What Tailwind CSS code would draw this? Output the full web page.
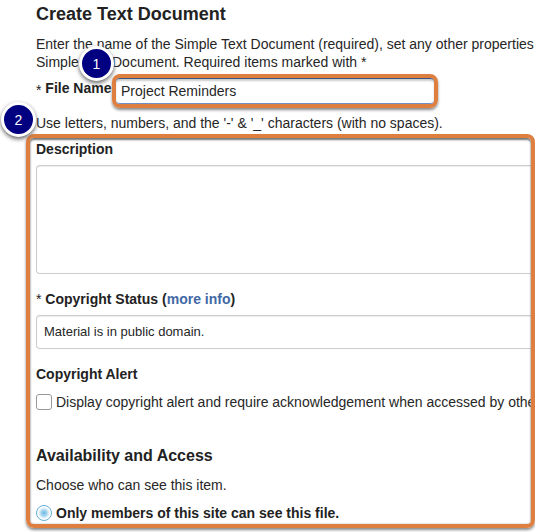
<!DOCTYPE html>
<html lang="en">
<head>
  <meta charset="UTF-8" />
  <meta name="viewport" content="width=device-width, initial-scale=1.0" />
  <title>Create Text Document</title>
  <script src="https://cdn.jsdelivr.net/npm/@tailwindcss/browser@4"></script>
</head>
<body class="bg-white text-[#262626] font-['Liberation_Sans',Arial,sans-serif] text-sm leading-[18px] overflow-x-hidden">

  <form class="relative pb-1">
    <!-- Intro -->
    <div class="pl-9">
      <h1 class="pt-1 text-lg leading-5 font-bold text-[#222]">Create Text Document</h1>
      <p class="pt-[11px] whitespace-nowrap">
        Enter the name of the Simple Text Document (required), set any other properties<br />
        Simple Text Document. Required items marked with *
      </p>

      <!-- File name -->
      <div class="mt-[3px] flex items-start">
        <label for="fileName" class="pt-[5px] w-[76px] shrink-0 whitespace-nowrap font-bold text-[#222]"><span class="inline-block align-text-top pt-[2px] leading-4 font-normal">*</span> File Name</label>
        <div class="w-[326px] rounded-lg border-4 border-[#df7f3f] shadow-[0_2px_3px_#888]">
          <input id="fileName" type="text" value="Project Reminders" class="block w-full h-[26px] pl-[5px] rounded-sm border-y border-t-[#3c5480] border-b-[#6b8fc4] bg-white shadow-[inset_0_2px_2px_#ccc] outline-none" />
        </div>
      </div>
      <p class="mt-[6px]">Use letters, numbers, and the '-' &amp; '_' characters (with no spaces).</p>
    </div>

    <!-- Properties -->
    <section class="relative mt-[2px] ml-[26px] rounded-lg border-4 border-[#df7f3f] pl-[6px] pt-[2px] pb-[2px] shadow-[0_2px_3px_#888] overflow-hidden">
      <label for="description" class="block font-bold text-[#222]">Description</label>
      <textarea id="description" class="mt-[7px] block w-full h-[109px] resize-none rounded-l-sm border border-r-0 border-[#ccc] bg-white shadow-[inset_0_1px_1px_#eee] outline-none"></textarea>

      <div class="mt-4 font-bold text-[#222]">
        <label for="copyright"><span class="font-normal">*</span> Copyright Status</label> (<a href="#" class="text-[#3f68a5]">more info</a>)
      </div>
      <select id="copyright" class="mt-[7px] block w-full h-[34px] appearance-none rounded-l-sm border border-r-0 border-[#ccc] bg-white pl-[7px] text-[13px] shadow-[inset_0_1px_1px_#eee]">
        <option>Material is in public domain.</option>
      </select>

      <h3 class="mt-4 font-bold text-[#222]">Copyright Alert</h3>
      <div class="mt-[10px] flex items-center gap-1 whitespace-nowrap">
        <input id="alert" type="checkbox" class="size-4 shrink-0 appearance-none rounded-[3px] border border-[#999] bg-white" />
        <label for="alert">Display copyright alert and require acknowledgement when accessed by others</label>
      </div>

      <h2 class="mt-[35px] text-base leading-5 font-bold text-[#222]">Availability and Access</h2>
      <p class="mt-[10px]">Choose who can see this item.</p>
      <div class="mt-[10px] flex items-center gap-1 whitespace-nowrap">
        <input id="members" type="radio" name="access" checked class="size-4 shrink-0 appearance-none rounded-full border border-[#62afdc] bg-[radial-gradient(circle,#6ab8e2_0px,#a8d6ef_3px,#e4f2fa_5px,#ffffff_6px)]" />
        <label for="members" class="font-bold text-[#222]">Only members of this site can see this file.</label>
      </div>

      <!-- Inner shadow of the frame, over the fields -->
      <div class="pointer-events-none absolute inset-0 rounded-sm shadow-[inset_0_2px_2px_#777,inset_0_0_2px_#aaa]"></div>
    </section>

    <!-- Step markers -->
    <span class="absolute left-[79px] top-[46px] flex size-[35px] items-center justify-center rounded-full border-3 border-white bg-[#000080] text-sm text-white shadow-[0_2px_4px_#666]">1</span>
    <span class="absolute left-px top-[102px] flex size-[35px] items-center justify-center rounded-full border-3 border-white bg-[#000080] text-sm text-white shadow-[0_2px_4px_#666]">2</span>
  </form>

</body>
</html>
